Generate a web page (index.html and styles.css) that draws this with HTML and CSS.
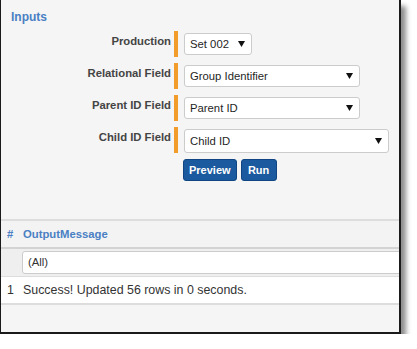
FILE: index.html
```html
<!DOCTYPE html>
<html lang="en">
<head>
    <meta charset="UTF-8">
    <title>Inputs</title>
    <link rel="stylesheet" href="styles.css">
</head>
<body>
<div class="frame">
    <div class="inputs">
        <h2 class="title">Inputs</h2>
        <div class="form">
            <div class="label">Production</div>
            <div class="required"></div>
            <div class="select select-short"><span>Set 002</span><svg class="caret" width="7" height="6" viewBox="0 0 7 6"><path d="M0 0H7L3.5 6Z"/></svg></div>

            <div class="label">Relational Field</div>
            <div class="required"></div>
            <div class="select select-mid"><span>Group Identifier</span><svg class="caret" width="7" height="6" viewBox="0 0 7 6"><path d="M0 0H7L3.5 6Z"/></svg></div>

            <div class="label">Parent ID Field</div>
            <div class="required"></div>
            <div class="select select-mid"><span>Parent ID</span><svg class="caret" width="7" height="6" viewBox="0 0 7 6"><path d="M0 0H7L3.5 6Z"/></svg></div>

            <div class="label">Child ID Field</div>
            <div class="required"></div>
            <div class="select select-long"><span>Child ID</span><svg class="caret" width="7" height="6" viewBox="0 0 7 6"><path d="M0 0H7L3.5 6Z"/></svg></div>

            <div class="actions">
                <button class="btn">Preview</button>
                <button class="btn btn-run">Run</button>
            </div>
        </div>
    </div>

    <div class="results">
        <div class="row head">
            <div class="cell num">#</div>
            <div class="cell">OutputMessage</div>
        </div>
        <div class="row filter">
            <div class="cell num"></div>
            <div class="cell"><div class="filter-input">(All)</div></div>
        </div>
        <div class="row data">
            <div class="cell num">1</div>
            <div class="cell">Success! Updated 56 rows in 0 seconds.</div>
        </div>
    </div>
</div>
</body>
</html>
```

FILE: styles.css
```css
body {
    margin: 0;
    background: #fff;
    font-family: "Liberation Sans", Arial, sans-serif;
}

.frame {
    box-sizing: border-box;
    width: 401px;
    height: 334px;
    background: #f5f5f5;
    border: 2px solid #1a1a1a;
    border-top: none;
    border-left-width: 1px;
    box-shadow: 5px 6px 5px rgba(0, 0, 0, 0.45);
    overflow: hidden;
}

.inputs {
    padding: 10px 0 38px;
    border-bottom: 2px solid #dddddd;
}

.title {
    margin: 0 0 6px 10px;
    font-size: 12px;
    line-height: 15px;
    font-weight: bold;
    color: #4a80c4;
}

.form {
    display: grid;
    grid-template-columns: 170px 4px auto;
    row-gap: 6px;
    align-items: start;
}

.label {
    height: 26px;
    padding: 4px 0 0 0;
    box-sizing: border-box;
    text-align: right;
    font-size: 11.3px;
    font-weight: bold;
    color: #444;
}

.required {
    height: 26px;
    width: 4px;
    margin-left: 3px;
    background: #f29d2b;
}

.select {
    box-sizing: border-box;
    height: 22px;
    margin: 2px 0 0 9px;
    padding: 0 6px 0 5px;
    display: flex;
    align-items: center;
    justify-content: space-between;
    background: #fff;
    border: 1px solid #cccccc;
    border-radius: 3px;
    font-size: 11.3px;
    color: #1f1f1f;
}

.select-short { width: 68px; }
.select-mid { width: 176px; }
.select-long { width: 205px; height: 24px; }

.caret { fill: #111; }

.actions {
    grid-column: 3;
    display: flex;
    gap: 4px;
    margin: 0 0 0 8px;
}

.btn {
    height: 22px;
    padding: 0 5px;
    background: #1b5a9e;
    border: 1px solid #0f4582;
    border-radius: 3px;
    color: #fff;
    font-family: inherit;
    font-size: 11px;
    font-weight: bold;
}

.btn-run { min-width: 36px; }

.row {
    display: grid;
    grid-template-columns: 21px 1fr;
    align-items: center;
}

.cell {
    font-size: 12.4px;
    color: #333;
    white-space: nowrap;
    padding-left: 1px;
}

.cell.num {
    padding-left: 6px;
}

.head {
    height: 26px;
    background: #f3f3f3;
    border-bottom: 2px solid #d3d3d3;
}

.head .cell {
    font-size: 11.3px;
    font-weight: bold;
    color: #4a80c4;
}

.filter {
    height: 27px;
    background: #efefef;
    border-bottom: 1px solid #dddddd;
}

.filter-input {
    box-sizing: border-box;
    width: 400px;
    height: 23px;
    margin-left: -1px;
    padding: 4px 5px 0;
    background: #fff;
    border: 1px solid #cccccc;
    border-radius: 3px;
    font-size: 11.3px;
    color: #333;
}

.data {
    height: 26px;
    background: #fff;
    border-bottom: 2px solid #dddddd;
}
```
